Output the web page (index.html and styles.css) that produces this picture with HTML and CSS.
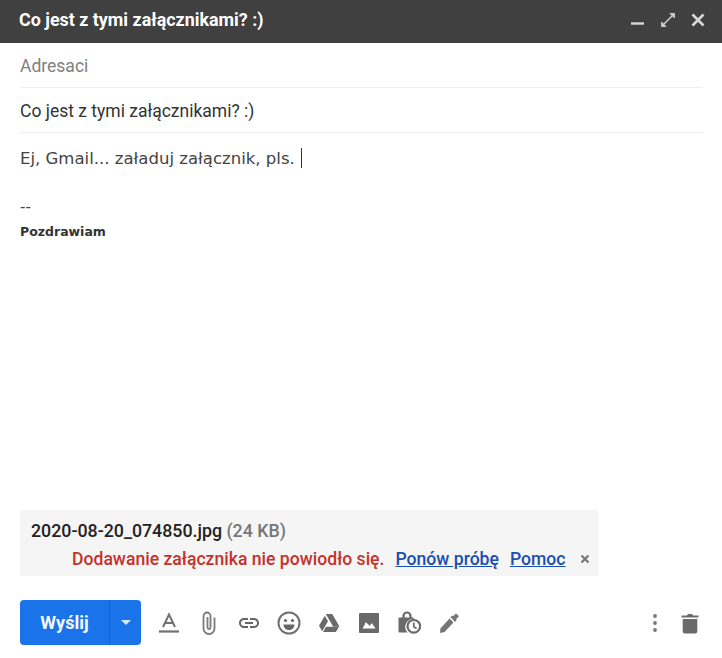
FILE: index.html
```html
<!DOCTYPE html>
<html lang="pl">
<head>
<meta charset="utf-8">
<title>Co jest z tymi załącznikami? :)</title>
<link rel="stylesheet" href="styles.css">
</head>
<body>
<div class="compose">
  <header class="titlebar">
    <span class="title">Co jest z tymi załącznikami? :)</span>
    <div class="winctl">
      <svg class="wi" viewBox="0 0 16 16"><path d="M1 11.500h13" stroke="#d8d8d8" stroke-width="2.400" fill="none"/></svg>
      <svg class="wi" viewBox="0 0 16 16"><path d="M3 13 13 3" stroke="#c8c8c8" stroke-width="1.600" fill="none"/><path d="M10 1.500h4.500V6zM1.500 10v4.500H6z" stroke="#c8c8c8" stroke-width="1" fill="#c8c8c8"/></svg>
      <svg class="wi" viewBox="0 0 16 16"><path d="M2.500 2.500l11 11M13.500 2.500l-11 11" stroke="#d8d8d8" stroke-width="2.600" fill="none"/></svg>
    </div>
  </header>
  <div class="field recipients">Adresaci</div>
  <div class="field subject">Co jest z tymi załącznikami? :)</div>
  <main class="body">
    <p class="message">Ej, Gmail... załaduj załącznik, pls. <span class="caret"></span></p>
    <p class="dashes">--</p>
    <p class="sig">Pozdrawiam</p>
  </main>
  <section class="attachment">
    <div class="fileline"><span class="fname">2020-08-20_074850.jpg</span> <span class="fsize">(24 KB)</span></div>
    <div class="errline">
      <span class="err">Dodawanie załącznika nie powiodło się.</span>
      <a class="lnk">Ponów próbę</a>
      <a class="lnk">Pomoc</a>
      <svg class="errx" viewBox="0 0 10 10"><path d="M1.500 1.500l7 7M8.500 1.500l-7 7" stroke="#777" stroke-width="2.200" fill="none"/></svg>
    </div>
  </section>
  <footer class="toolbar">
    <div class="send">
      <span class="sendlabel">Wyślij</span>
      <span class="sendarrow"><svg width="10" height="5" viewBox="0 0 10 5"><path d="M0 0h10L5 5z" fill="#d5e6fb"/></svg></span>
    </div>
    <div class="tools">
      <svg class="ti" viewBox="0 0 24 24"><path d="M6 16 12 3.500 18 16M8 12h8" stroke="#707070" stroke-width="2" fill="none"/><path d="M2 20.500h20" stroke="#707070" stroke-width="2.200"/></svg>
      <svg class="ti" viewBox="0 0 24 24"><path d="M17.500 6.500v11a5.500 5.500 0 0 1-11 0V5a3.500 3.500 0 0 1 7 0v11.500a1.500 1.500 0 0 1-3 0V6" stroke="#7a7a7a" stroke-width="1.800" fill="none"/></svg>
      <svg class="ti" viewBox="0 0 24 24"><path d="M3.900 12c0-1.710 1.390-3.100 3.100-3.100h4V7H7c-2.760 0-5 2.240-5 5s2.240 5 5 5h4v-1.900H7c-1.710 0-3.100-1.390-3.100-3.100zM8 13h8v-2H8v2zm9-6h-4v1.900h4c1.710 0 3.100 1.390 3.100 3.100s-1.390 3.100-3.100 3.100h-4V17h4c2.760 0 5-2.240 5-5s-2.240-5-5-5z" fill="#666"/></svg>
      <svg class="ti" viewBox="0 0 24 24"><circle cx="12" cy="12" r="10.500" stroke="#707070" stroke-width="2" fill="none"/><circle cx="8.500" cy="9.500" r="1.600" fill="#666"/><circle cx="15.500" cy="9.500" r="1.600" fill="#666"/><path d="M6.500 13.500h11a5.500 5.500 0 0 1-11 0z" fill="#666"/></svg>
      <svg class="ti" viewBox="0 0 24 24"><path d="M8.800 3h6.400l7.300 12.500h-6.400zM7.800 4.700l3.200 5.600-5.800 10L2 14.700zM9 15.700h13l-3.200 5.300H6z" fill="#6a6a6a"/></svg>
      <svg class="ti" viewBox="0 0 24 24"><path d="M3 2h18a1 1 0 0 1 1 1v18a1 1 0 0 1-1 1H3a1 1 0 0 1-1-1V3a1 1 0 0 1 1-1zm2.500 15.500h13l-2.200-3.200-1.500-2.300-2.300 3.100-1.500-2.100-2.500-1.800-1.200 3.300z" fill="#6a6a6a" fill-rule="evenodd"/></svg>
      <svg class="ti" viewBox="0 0 24 24"><path d="M6.500 8V5a3.500 3.500 0 0 1 7 0v3" stroke="#6a6a6a" stroke-width="2.200" fill="none"/><path d="M2.500 6.500h13a1.500 1.500 0 0 1 1.500 1.500H17a8 8 0 0 0-6.500 13.500H2.500a1 1 0 0 1-1-1V7.500a1 1 0 0 1 1-1z" fill="#6a6a6a"/><circle cx="16.800" cy="15.300" r="6.300" stroke="#6a6a6a" stroke-width="2.200" fill="none"/><path d="M16.800 11.500v4.300l2.800 1.600" stroke="#6a6a6a" stroke-width="1.700" fill="none"/></svg>
      <svg class="ti" viewBox="0 0 24 24"><path d="M3 22l.4-4.500L12.500 7.500l4 4-9 9.500z" fill="#757575"/><path d="M13.500 6l1.800-1.600.8.800L19 2.500l3 2.800-3 3 .8.800L18 11z" fill="#757575"/></svg>
    </div>
    <div class="right">
      <svg class="ti more" viewBox="0 0 24 24"><circle cx="12" cy="5" r="1.900" fill="#777"/><circle cx="12" cy="12" r="1.900" fill="#777"/><circle cx="12" cy="19" r="1.900" fill="#777"/></svg>
      <svg class="ti trash" viewBox="0 0 24 24"><path d="M3.500 4.500H9L10 3h4l1 1.500h5.500v2h-17zM4.700 8h14.600v12.500a2 2 0 0 1-2 2H6.700a2 2 0 0 1-2-2z" fill="#6a6a6a"/></svg>
    </div>
  </footer>
</div>
</body>
</html>
```

FILE: styles.css
```css
* { box-sizing: border-box; }
html, body { margin: 0; padding: 0; background: #fff; }
body { font-family: Roboto, "Liberation Sans", sans-serif; width: 722px; height: 658px; overflow: hidden; }
.compose { display: flex; flex-direction: column; height: 658px; }
.titlebar { height: 43px; background: #404040; display: flex; align-items: center; justify-content: space-between; padding: 0 16px 4px 19px; flex: none; }
.title { color: #fff; font-size: 17.900px; font-weight: 700; }
.winctl { display: flex; gap: 14px; align-items: center; }
.wi { width: 16px; height: 16px; display: block; }
.field { margin: 0 19px 0 20px; font-size: 17.500px; flex: none; border-bottom: 1px solid #eee; }
.recipients { height: 45px; padding-top: 13px; color: #808080; }
.subject { height: 45px; padding-top: 13px; color: #333; }
.body { flex: 1; padding: 15px 20px 0; font-family: "DejaVu Sans", Verdana, sans-serif; color: #444; }
.body p { margin: 0; }
.message { font-size: 16.550px; line-height: 22px; display: flex; white-space: pre; }
.caret { display: inline-block; width: 1px; height: 20px; background: #333; margin: 0 0 0 1px; }
.dashes { font-size: 15px; line-height: 20px; margin-top: 27px !important; }
.sig { font-size: 12.500px; font-weight: 700; line-height: 16px; margin-top: 7px !important; color: #333; }
.attachment { flex: none; margin: 0 124px 24px 20px; height: 66px; background: #f5f5f5; padding: 11px 0 0 11px; }
.fileline { font-size: 17.800px; font-weight: 500; color: #222; line-height: 20px; }
.fsize { color: #777; }
.errline { margin-top: 8px; padding-left: 41px; display: flex; align-items: center; font-size: 17.600px; font-weight: 500; line-height: 20px; white-space: nowrap; }
.err { color: #c5312b; margin-right: 11px; }
.lnk { color: #1a4fb0; text-decoration: underline; margin-right: 11px; }
.errx { width: 10px; height: 10px; margin-left: 3px; }
.toolbar { flex: none; height: 58px; display: flex; padding: 0 20px 13px; align-items: flex-start; }
.send { width: 121px; height: 45px; background: #1a73e8; border-radius: 4px; display: flex; color: #f4f9ff; font-size: 18px; font-weight: 700; }
.sendlabel { width: 89px; display: flex; align-items: center; justify-content: center; }
.sendarrow { flex: 1; border-left: 1px solid #1460c4; display: flex; align-items: center; justify-content: center; }
.tools { display: flex; gap: 16px; margin-left: 16px; padding-top: 11px; }
.ti { width: 24px; height: 24px; display: block; }
.right { margin-left: auto; display: flex; gap: 11px; padding-top: 11px; }
```
